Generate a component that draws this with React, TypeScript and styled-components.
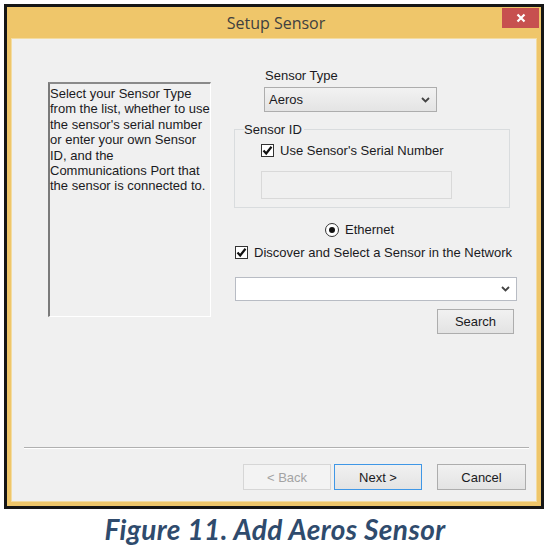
import React from "react";
import styled, { createGlobalStyle } from "styled-components";

const GlobalStyle = createGlobalStyle`
  html, body { margin: 0; padding: 0; background: #ffffff; }
  body { font-family: "Liberation Sans", Arial, sans-serif; }
  * { box-sizing: border-box; }
`;

const Page = styled.div`
  width: 550px;
  height: 545px;
  padding: 4px 0 0 4px;
  display: flex;
  flex-direction: column;
  overflow: hidden;
`;

const Window = styled.div`
  width: 540px;
  height: 505px;
  border: 3px solid #161616;
  background: #efc66a;
  display: flex;
  flex-direction: column;
`;

const TitleBar = styled.div`
  height: 31px;
  flex: none;
  display: grid;
  grid-template-columns: 1fr auto 1fr;
`;

const Title = styled.div`
  grid-column: 2;
  align-self: center;
  padding-left: 4px;
  font-family: "Open Sans", "Noto Sans", sans-serif;
  font-size: 16px;
  color: #404040;
  line-height: 20px;
`;

const CloseButton = styled.div`
  grid-column: 3;
  justify-self: end;
  align-self: start;
  margin: 1px 2px 0 0;
  width: 37px;
  height: 20px;
  background: #c7504f;
  display: flex;
  align-items: center;
  justify-content: center;
`;

const Client = styled.div`
  flex: none;
  height: 464px;
  margin: 0 4px;
  background: #f0f0f0;
  box-shadow: inset 0 0 0 1px #f3dca2;
  display: flex;
  flex-direction: column;
  font-size: 13px;
  color: #1a1a22;
`;

const MainRow = styled.div`
  display: flex;
  align-items: flex-start;
  padding: 30px 0 0 37px;
  gap: 23px;
`;

const InfoPanel = styled.div`
  width: 163px;
  height: 235px;
  margin-top: 14px;
  border-style: solid;
  border-width: 2px 1px 1px 2px;
  border-color: #8a8a8a #ffffff #ffffff #7a7a7a;
  padding: 2px 0 0 0;
  line-height: 15.4px;
  font-size: 13px;
`;

const FormColumn = styled.div`
  width: 283px;
  display: flex;
  flex-direction: column;
`;

const Label = styled.div<{ $indent: number }>`
  margin-left: ${(p) => p.$indent}px;
  line-height: 15px;
`;

const Combo = styled.div<{ $width: number; $indent: number; $flat?: boolean }>`
  width: ${(p) => p.$width}px;
  height: ${(p) => (p.$flat ? 24 : 25)}px;
  margin-left: ${(p) => p.$indent}px;
  border: 1px solid ${(p) => (p.$flat ? "#b8bcc4" : "#adadad")};
  background: ${(p) => (p.$flat ? "#ffffff" : "linear-gradient(#f2f2f2, #e4e4e4)")};
  display: flex;
  align-items: center;
  justify-content: space-between;
  padding: 0 6px 0 4px;
`;

const GroupBox = styled.fieldset`
  width: 276px;
  margin: 10px 0 0 0;
  padding: 0 0 8px 9px;
  border: 1px solid #d9dcde;
  display: flex;
  flex-direction: column;
  min-inline-size: 0;
`;

const Legend = styled.legend`
  padding: 0 2px 0 0;
  line-height: 15px;
`;

const CheckRow = styled.label<{ $indent: number; $top: number }>`
  display: flex;
  align-items: center;
  gap: 6px;
  height: 15px;
  margin: ${(p) => p.$top}px 0 0 ${(p) => p.$indent}px;
`;

const CheckBox = styled.span`
  width: 13px;
  height: 13px;
  flex: none;
  border: 1px solid #333333;
  background: #ffffff;
  display: flex;
  align-items: center;
  justify-content: center;
`;

const RadioCircle = styled.span`
  width: 14px;
  height: 14px;
  flex: none;
  border-radius: 50%;
  border: 1px solid #333333;
  background: #ffffff;
  display: flex;
  align-items: center;
  justify-content: center;
  &::after {
    content: "";
    width: 6px;
    height: 6px;
    border-radius: 50%;
    background: #111111;
  }
`;

const TextField = styled.div`
  width: 191px;
  height: 28px;
  margin: 13px 0 0 17px;
  border: 1px solid #d9d9d9;
  background: #f0f0f0;
`;

const Button = styled.div<{ $state?: "disabled" | "default" }>`
  width: ${(p) => (p.$state ? 88 : 89)}px;
  height: 26px;
  display: flex;
  align-items: center;
  justify-content: center;
  font-size: 13px;
  border: 1px solid
    ${(p) => (p.$state === "disabled" ? "#d6d6d6" : p.$state === "default" ? "#3f97e6" : "#adadad")};
  background: ${(p) => (p.$state === "disabled" ? "#f3f3f3" : "linear-gradient(#f1f1f1, #e3e3e3)")};
  color: ${(p) => (p.$state === "disabled" ? "#a3a3a3" : "#1a1a22")};
`;

const SearchButton = styled(Button)`
  width: 77px;
  height: 25px;
  align-self: flex-end;
  margin: 8px 3px 0 0;
`;

const Separator = styled.div`
  margin: auto 8px 0 13px;
  height: 1px;
  background: #b0b0b0;
  box-shadow: 0 1px 0 #ffffff;
`;

const ButtonRow = styled.div`
  display: flex;
  justify-content: flex-end;
  margin-top: 16px;
  padding: 0 11px 12px 0;
`;

const ButtonGap = styled.div<{ $w: number }>`
  width: ${(p) => p.$w}px;
`;

const Caption = styled.div`
  margin-top: 4px;
  text-align: center;
  font-family: Lato, "Open Sans", sans-serif;
  font-weight: 700;
  font-style: italic;
  font-size: 28px;
  letter-spacing: 0.4px;
  line-height: 32px;
  color: #2f4b6d;
  padding-right: 4px;
`;

const Chevron = () => (
  <svg width="9" height="6" viewBox="0 0 9 6">
    <path d="M1 1 L4.5 4.5 L8 1" fill="none" stroke="#444" strokeWidth="1.8" />
  </svg>
);

const Check = () => (
  <svg width="11" height="11" viewBox="0 0 11 11">
    <path d="M1.5 5.5 L4.2 8.5 L9.5 1.8" fill="none" stroke="#111" strokeWidth="2.2" />
  </svg>
);

export default function App() {
  return (
    <>
      <GlobalStyle />
      <Page>
        <Window>
          <TitleBar>
            <Title>Setup Sensor</Title>
            <CloseButton>
              <svg width="10" height="10" viewBox="0 0 10 10">
                <path d="M1.5 1.5 L8.5 8.5 M8.5 1.5 L1.5 8.5" stroke="#fff" strokeWidth="2.2" />
              </svg>
            </CloseButton>
          </TitleBar>
          <Client>
            <MainRow>
              <InfoPanel>
                Select your Sensor Type from the list, whether to use the sensor's serial number or
                enter your own Sensor ID, and the Communications Port that the sensor is connected
                to.
              </InfoPanel>
              <FormColumn>
                <Label $indent={31}>Sensor Type</Label>
                <Combo $width={173} $indent={30} style={{ marginTop: 4 }}>
                  <span>Aeros</span>
                  <Chevron />
                </Combo>
                <GroupBox>
                  <Legend>Sensor ID</Legend>
                  <CheckRow $indent={17} $top={6}>
                    <CheckBox>
                      <Check />
                    </CheckBox>
                    Use Sensor's Serial Number
                  </CheckRow>
                  <TextField />
                </GroupBox>
                <CheckRow $indent={91} $top={14}>
                  <RadioCircle />
                  Ethernet
                </CheckRow>
                <CheckRow $indent={1} $top={8}>
                  <CheckBox>
                    <Check />
                  </CheckBox>
                  Discover and Select a Sensor in the Network
                </CheckRow>
                <Combo $width={282} $indent={1} $flat style={{ marginTop: 17 }}>
                  <span />
                  <Chevron />
                </Combo>
                <SearchButton>Search</SearchButton>
              </FormColumn>
            </MainRow>
            <Separator />
            <ButtonRow>
              <Button $state="disabled">&lt; Back</Button>
              <ButtonGap $w={3} />
              <Button $state="default">Next &gt;</Button>
              <ButtonGap $w={15} />
              <Button>Cancel</Button>
            </ButtonRow>
          </Client>
        </Window>
        <Caption>Figure 11. Add Aeros Sensor</Caption>
      </Page>
    </>
  );
}
